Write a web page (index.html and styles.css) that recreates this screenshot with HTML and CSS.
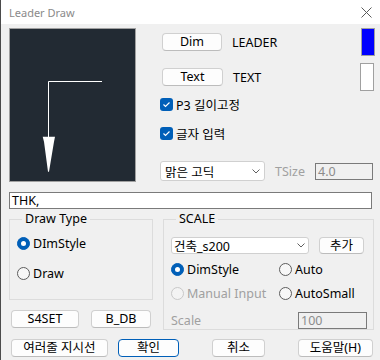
FILE: index.html
```html
<!DOCTYPE html>
<html lang="ko">
<head>
<meta charset="UTF-8">
<title>Leader Draw</title>
<link rel="stylesheet" href="styles.css">
</head>
<body>

    <div class="titlebar">
        <span class="title">Leader Draw</span>
        <svg class="close" width="11" height="11" viewBox="0 0 11 11">
            <path d="M0.5 0.5 L10.5 10.5 M10.5 0.5 L0.5 10.5" stroke="#5a5a5a" stroke-width="1" fill="none"/>
        </svg>
    </div>

    <div class="main">
        <div class="top">
            <div class="preview">
                <svg width="125" height="152" viewBox="0 0 125 152">
                    <path d="M38.5 108 L38.5 52.5 L92 52.5" stroke="#fff" stroke-width="1" fill="none"/>
                    <polygon points="32.7,107.7 45,107.7 44,112.7 39,142.7 38,142.7 34,112.7" fill="#fff"/>
                </svg>
            </div>

            <div class="options">
                <div class="opt-row">
                    <button class="btn btn-dim">Dim</button>
                    <span class="opt-label">LEADER</span>
                    <span class="swatch swatch-blue"></span>
                </div>
                <div class="opt-row row-text">
                    <button class="btn btn-text">Text</button>
                    <span class="opt-label">TEXT</span>
                    <span class="swatch swatch-white"></span>
                </div>
                <div class="check check-p3">
                    <span class="box"><svg width="13" height="13" viewBox="0 0 13 13"><polyline points="3.5,6.5 5.5,8.5 9.5,4.5" stroke="#fff" stroke-width="1.1" fill="none"/></svg></span>
                    <span>P3 길이고정</span>
                </div>
                <div class="check check-text">
                    <span class="box"><svg width="13" height="13" viewBox="0 0 13 13"><polyline points="3.5,6.5 5.5,8.5 9.5,4.5" stroke="#fff" stroke-width="1.1" fill="none"/></svg></span>
                    <span>글자 입력</span>
                </div>
                <div class="font-row">
                    <div class="combo combo-font">
                        <span>맑은 고딕</span>
                        <svg width="8" height="5" viewBox="0 0 8 5"><polyline points="0.5,0.5 4,4 7.5,0.5" stroke="#606060" fill="none"/></svg>
                    </div>
                    <span class="dis-label tsize-label">TSize</span>
                    <div class="field field-disabled tsize-field">4.0</div>
                </div>
            </div>
        </div>

        <div class="field text-field">THK,</div>

        <div class="lower">
            <div class="left-col">
                <div class="group group-draw">
                    <span class="legend">Draw Type</span>
                    <div class="radio on draw-r1"><span class="dot"></span><span>DImStyle</span></div>
                    <div class="radio draw-r2"><span class="dot"></span><span>Draw</span></div>
                </div>
                <div class="btn-row">
                    <button class="btn btn-s4set">S4SET</button>
                    <button class="btn btn-bdb">B_DB</button>
                </div>
            </div>

            <div class="group group-scale">
                <span class="legend">SCALE</span>
                <div class="scale-combo-row">
                    <div class="combo combo-scale">
                        <span>건축_s200</span>
                        <svg width="8" height="5" viewBox="0 0 8 5"><polyline points="0.5,0.5 4,4 7.5,0.5" stroke="#606060" fill="none"/></svg>
                    </div>
                    <button class="btn btn-add">추가</button>
                </div>
                <div class="radio-grid">
                    <div class="radio on"><span class="dot"></span><span>DimStyle</span></div>
                    <div class="radio"><span class="dot"></span><span>Auto</span></div>
                    <div class="radio disabled"><span class="dot"></span><span>Manual Input</span></div>
                    <div class="radio"><span class="dot"></span><span>AutoSmall</span></div>
                </div>
                <div class="scale-row">
                    <span class="dis-label">Scale</span>
                    <div class="field field-disabled scale-field">100</div>
                </div>
            </div>
        </div>

        <div class="footer">
            <button class="btn btn-multi">여러줄 지시선</button>
            <button class="btn btn-default btn-ok">확인</button>
            <button class="btn btn-cancel">취소</button>
            <button class="btn btn-help">도움말(H)</button>
        </div>
    </div>

</body>
</html>
```

FILE: styles.css
```css
* {
    box-sizing: border-box;
}
html, body {
    margin: 0;
}
body {
    width: 380px;
    height: 360px;
    overflow: hidden;
    background-color: #f0f0f0;
    border-left: 1px solid #4b4b4b;
    font-family: "Noto Sans", "Noto Sans CJK KR", sans-serif;
    font-size: 12.5px;
    color: #000;
}

/* 타이틀바 */
.titlebar {
    height: 24px;
    background-color: #fff;
    display: flex;
    align-items: center;
    justify-content: space-between;
    padding: 0 8px 0 8px;
}
.title {
    font-size: 11px;
    color: #8a8a8a;
}

.main {
    padding: 4px 0 0 8px;
}

/* 상단: 미리보기 + 옵션 */
.top {
    display: flex;
}
.preview {
    width: 127px;
    height: 154px;
    border: 1px solid #a0a0a0;
    background-color: #222a33;
}
.preview svg {
    display: block;
}
.options {
    margin-left: 24px;
    width: 215px;
    display: flex;
    flex-direction: column;
}
.opt-row {
    display: flex;
    align-items: center;
    height: 28px;
}
.row-text {
    margin-top: 7px;
}
.opt-label {
    margin-left: 10px;
}
.swatch {
    margin-left: auto;
    width: 14px;
    height: 28px;
    border: 1px solid #a0a0a0;
}
.swatch-blue {
    background-color: #0000ff;
}
.swatch-white {
    background-color: #fff;
    margin-right: 1px;
}

/* 버튼 */
.btn {
    font: inherit;
    color: #000;
    height: 18px;
    padding: 0;
    line-height: 16px;
    background-color: #fdfdfd;
    border: 1px solid #d0d0d0;
    border-bottom-color: #bcbcbc;
    border-radius: 4px;
}
.btn-default {
    border-color: #005fb8;
}
.btn-dim {
    width: 60px;
    margin-left: 2px;
}
.btn-text {
    width: 61px;
    margin-left: 2px;
}

/* 체크박스 */
.check {
    display: flex;
    align-items: center;
    gap: 3px;
    height: 13px;
}
.check-p3 {
    margin-top: 7px;
}
.check-text {
    margin-top: 16px;
}
.check .box {
    width: 13px;
    height: 13px;
    border-radius: 3px;
    background-color: #005fb8;
}
.check .box svg {
    display: block;
}

/* 콤보 / 입력칸 */
.font-row {
    display: flex;
    align-items: center;
    margin-top: 21px;
    height: 20px;
}
.combo {
    display: flex;
    align-items: center;
    justify-content: space-between;
    background-color: #fff;
    border: 1px solid #d0d0d0;
    border-radius: 3px;
}
.combo-font {
    width: 105px;
    height: 20px;
    padding: 0 4px 0 4px;
}
.dis-label {
    color: #a0a0a0;
}
.tsize-label {
    margin-left: 10px;
}
.field {
    height: 17px;
    line-height: 15px;
    padding-left: 2px;
}
.field-disabled {
    border: 1px solid #7a7a7a;
    background-color: #f0f0f0;
    color: #8c8c8c;
}
.tsize-field {
    width: 58px;
    margin-left: auto;
    margin-right: 2px;
}
.text-field {
    margin-top: 10px;
    width: 363px;
    border: 1px solid #7a7a7a;
    background-color: #fff;
}

/* 하단 그룹 */
.lower {
    display: flex;
    margin-top: 10px;
}
.left-col {
    width: 144px;
}
.group {
    border: 1px solid #dcdcdc;
}
.legend {
    display: block;
    width: max-content;
    margin: -8px 0 0 5px;
    padding: 0 3px;
    line-height: 14px;
    background-color: #f0f0f0;
}
.group-draw {
    height: 81px;
    padding-left: 7px;
}
.draw-r1 {
    margin-top: 11px;
}
.draw-r2 {
    margin-top: 17px;
}

/* 라디오 */
.radio {
    display: flex;
    align-items: center;
    gap: 3px;
    height: 13px;
}
.radio .dot {
    width: 13px;
    height: 13px;
    border-radius: 50%;
    border: 1px solid #5d5d5d;
    background-color: #f7f7f7;
    display: flex;
    align-items: center;
    justify-content: center;
}
.radio.on .dot {
    border-color: #005fb8;
    background-color: #005fb8;
}
.radio.on .dot::after {
    content: "";
    width: 5px;
    height: 5px;
    border-radius: 50%;
    background-color: #fff;
}
.radio.disabled {
    color: #a0a0a0;
}
.radio.disabled .dot {
    border-color: #c8c8c8;
    background-color: #f3f3f3;
}

.btn-row {
    display: flex;
    gap: 12px;
    margin-top: 10px;
    padding-left: 2px;
}
.btn-s4set {
    width: 68px;
}
.btn-bdb {
    width: 60px;
}

.group-scale {
    margin-left: 10px;
    width: 211px;
    height: 111px;
    padding-left: 7px;
}
.scale-combo-row {
    display: flex;
    margin-top: 11px;
    height: 17px;
}
.combo-scale {
    width: 138px;
    height: 17px;
    padding: 0 3px 0 2px;
}
.btn-add {
    width: 45px;
    height: 17px;
    line-height: 15px;
    margin-left: 10px;
}
.radio-grid {
    display: grid;
    grid-template-columns: 108px auto;
    row-gap: 11px;
    margin-top: 9px;
}
.scale-row {
    display: flex;
    align-items: center;
    margin-top: 12px;
    height: 17px;
}
.scale-field {
    width: 69px;
    margin-left: auto;
    margin-right: 6px;
}

/* 하단 버튼 */
.footer {
    display: flex;
    margin-top: 9px;
}
.btn-multi {
    width: 97px;
    margin-left: 2px;
}
.btn-ok {
    width: 61px;
    margin-left: 10px;
}
.btn-cancel {
    width: 53px;
    margin-left: 33px;
}
.btn-help {
    width: 75px;
    margin-left: 33px;
}
```
